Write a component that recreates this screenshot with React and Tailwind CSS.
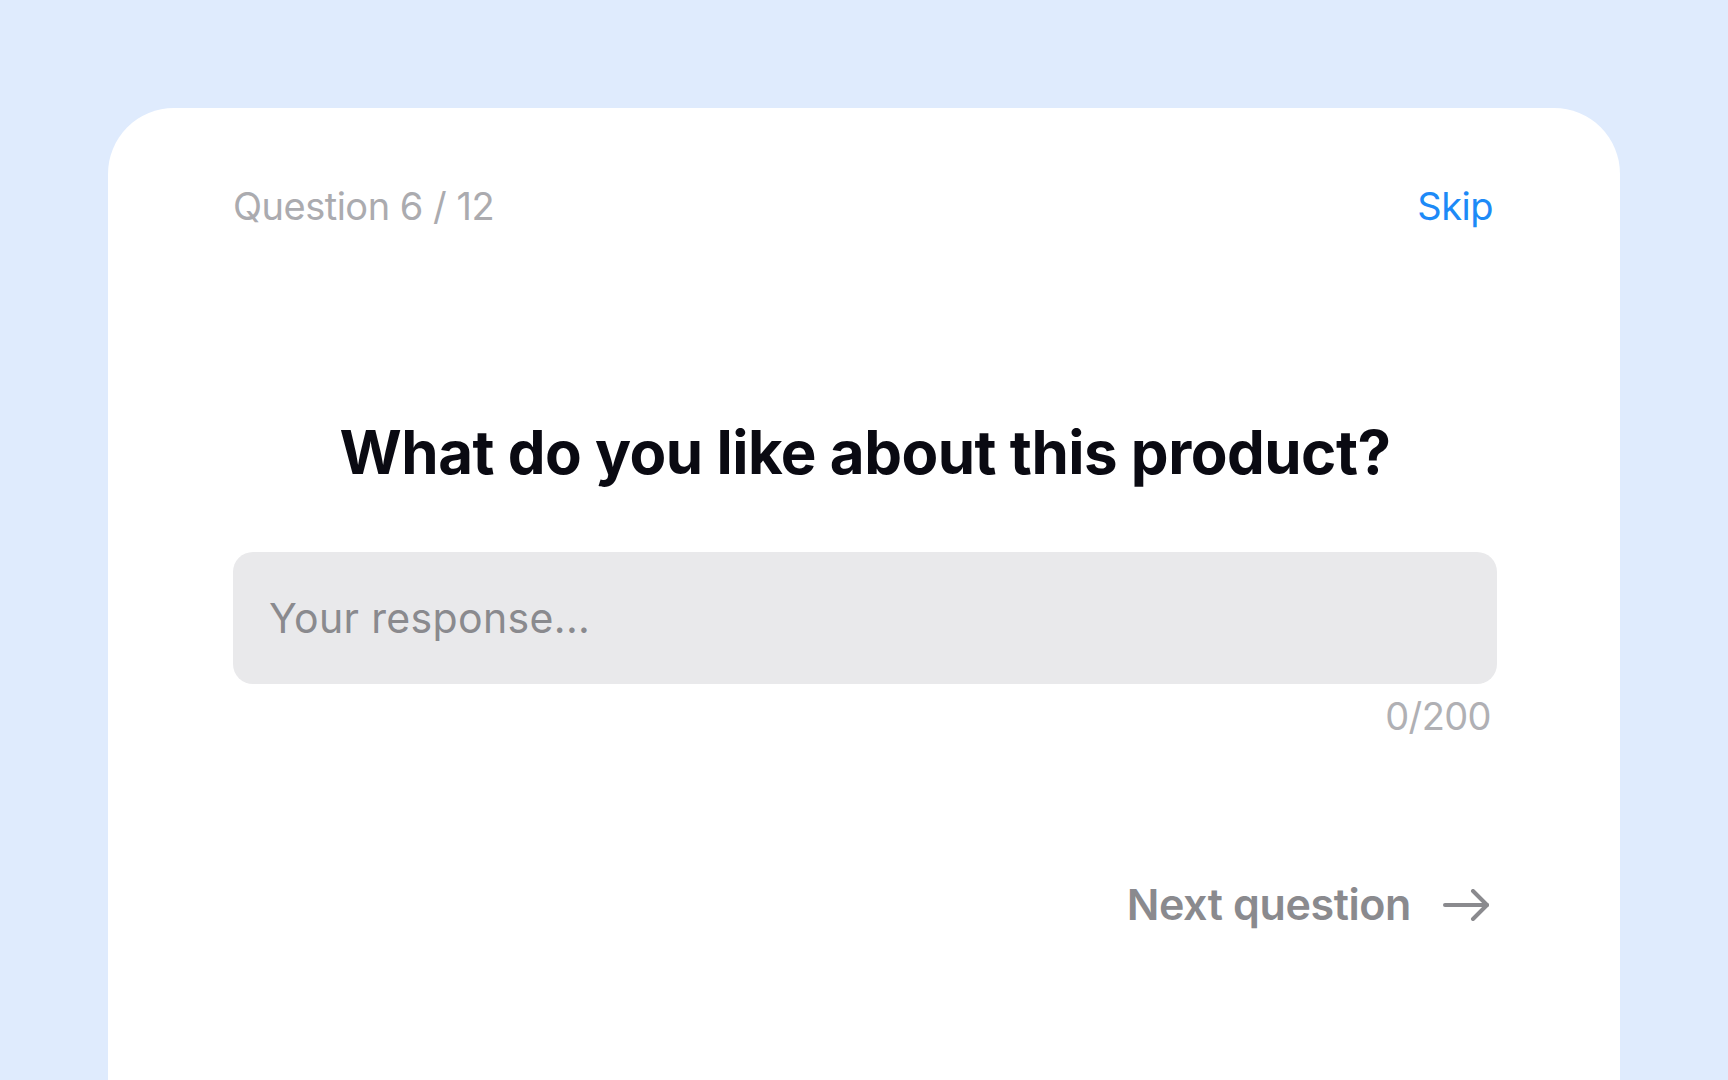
export default function App() {
  return (
    <div className="h-screen w-full overflow-hidden bg-[#dfebfd] px-[108px] pt-[108px] font-['Inter',sans-serif]">
      {/* Card */}
      <div className="h-[1100px] rounded-[66px] bg-white pl-[125px] pr-[123px] pt-[79px]">

        {/* Top row */}
        <div className="flex items-start justify-between pr-[4px]">
          <span className="text-[38px] leading-none tracking-[-0.5px] text-[#ababaf]">Question 6 / 12</span>
          <button className="text-[38px] leading-none tracking-[-0.5px] text-[#1d8af7]">Skip</button>
        </div>

        {/* Question */}
        <h1 className="mt-[197px] text-center text-[60px] font-bold leading-none tracking-[-0.5px] text-[#0a0a12]">
          What do you like about this product?
        </h1>

        {/* Response field */}
        <div className="mt-[70px] flex h-[132px] items-center rounded-[20px] bg-[#e9e9eb] px-[36px]">
          <span className="text-[41px] leading-none tracking-[0.35px] text-[#8a8a8e]">Your response...</span>
        </div>
        <div className="mt-[13px] flex justify-end pr-[6px]">
          <span className="text-[38px] leading-none tracking-[-0.6px] text-[#b0b0b4]">0/200</span>
        </div>

        {/* Next */}
        <div className="mt-[148px] flex items-center justify-end gap-[32px] pr-[8px]">
          <span className="text-[43px] font-semibold leading-none tracking-[-0.4px] text-[#8a8a8e]">Next question</span>
          <svg width="46" height="32" viewBox="0 0 46 32" fill="none" stroke="#8a8a8e" strokeWidth="4" strokeLinecap="round" strokeLinejoin="round">
            <path d="M2 16H44" />
            <path d="M30 2L44 16L30 30" />
          </svg>
        </div>
      </div>
    </div>
  );
}
